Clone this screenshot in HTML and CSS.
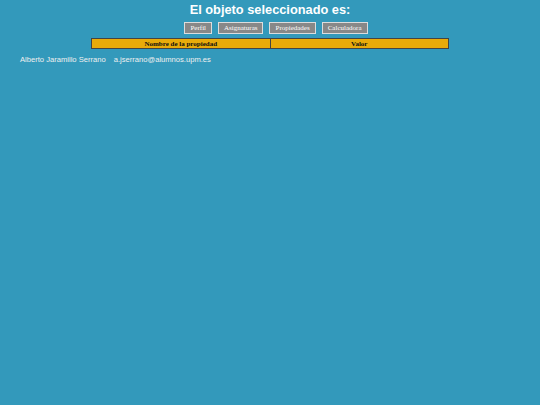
FILE: index.html
```html
<!DOCTYPE html>
<html>
<head>
<meta charset="utf-8">
<link rel="stylesheet" href="styles.css">
</head>
<body>
<h1 class="title">El objeto seleccionado es:</h1>
<nav class="menu">
  <button class="btn">Perfil</button>
  <button class="btn">Asignaturas</button>
  <button class="btn">Propiedades</button>
  <button class="btn">Calculadora</button>
</nav>
<table class="props">
  <tr><th>Nombre de la propiedad</th><th>Valor</th></tr>
</table>
<div class="user">
  <span>Alberto Jaramillo Serrano</span>
  <span>a.jserrano@alumnos.upm.es</span>
</div>
</body>
</html>
```

FILE: styles.css
```css
html, body {
  margin: 0;
  padding: 0;
  background: #3399bb;
  height: 100%;
}
.title {
  margin: 0;
  padding-top: 2px;
  text-align: center;
  color: #ffffff;
  font-family: "Liberation Sans", Arial, sans-serif;
  font-size: 12.8px;
  font-weight: bold;
  line-height: 16px;
}
.menu {
  display: flex;
  justify-content: center;
  gap: 6px;
  margin-top: 4px;
  padding-left: 12px;
}
.btn {
  font-family: "Liberation Serif", serif;
  font-size: 7px;
  font-weight: normal;
  color: #ffffff;
  background: #888888;
  border: 1px solid #dddddd;
  padding: 1px 5px;
  height: 12px;
  line-height: 8px;
}
.props {
  margin: 4px auto 0;
  width: 358px;
  border-collapse: collapse;
  background: #e8ab0a;
  border: 1px solid #444;
}
.props th {
  border: 1px solid #444;
  font-family: "Liberation Serif", serif;
  font-size: 7px;
  font-weight: bold;
  color: #111;
  padding: 0;
  height: 9px;
  line-height: 8px;
  width: 50%;
}
.user {
  margin-top: 6px;
  padding-left: 20px;
  display: flex;
  gap: 8px;
  font-family: "Liberation Sans", Arial, sans-serif;
  font-size: 7.6px;
  color: #f0f0f0;
}
```
